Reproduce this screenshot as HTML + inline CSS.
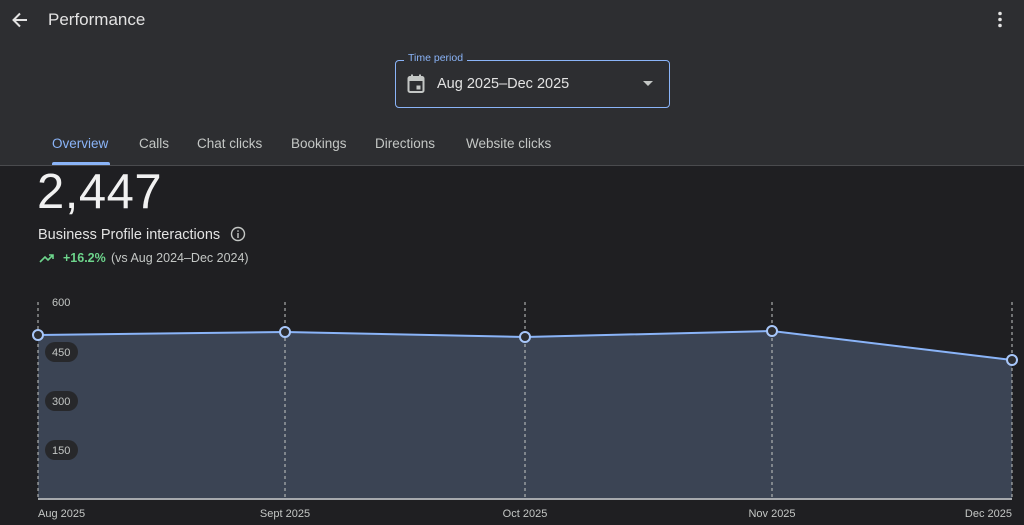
<!DOCTYPE html>
<html><head><meta charset="utf-8"><style>
*{margin:0;padding:0;box-sizing:border-box}
body{width:1024px;height:525px;overflow:hidden;background:#1f1f22;font-family:"Liberation Sans",sans-serif;position:relative;color:#e3e3e3}
.hdr{position:absolute;left:0;top:0;width:1024px;height:166px;background:#2d2e31;border-bottom:1px solid #4a4b4e}
.t{position:absolute;white-space:nowrap}
.tab{position:absolute;top:136px;font-size:13.5px;color:#c4c7c5}
</style></head><body>
<div class="hdr">
<svg class="t" style="left:10px;top:10px" width="20" height="20" viewBox="0 0 20 20"><path d="M17 10H4M10 3.5L3.5 10 10 16.5" stroke="#e3e3e3" stroke-width="2" fill="none"/></svg>
<div class="t" style="left:48px;top:10px;font-size:17px;color:#e3e3e3">Performance</div>
<svg class="t" style="left:996px;top:11px" width="8" height="18"><circle cx="4" cy="2.5" r="1.8" fill="#e3e3e3"/><circle cx="4" cy="8.5" r="1.8" fill="#e3e3e3"/><circle cx="4" cy="14.5" r="1.8" fill="#e3e3e3"/></svg>
<div class="t" style="left:395px;top:60px;width:275px;height:48px;border:1.5px solid #8ab4f8;border-radius:4px"></div>
<div class="t" style="left:404px;top:52px;padding:0 4px;background:#2d2e31;font-size:10.5px;color:#8ab4f8">Time period</div>
<svg class="t" style="left:407px;top:74px" width="18" height="20" viewBox="0 0 18 20"><rect x="1.5" y="3" width="15" height="15" rx="1.5" fill="none" stroke="#c4c7c5" stroke-width="2"/><rect x="1.5" y="3" width="15" height="4" fill="#c4c7c5"/><rect x="4" y="0.5" width="2" height="4" fill="#c4c7c5"/><rect x="12" y="0.5" width="2" height="4" fill="#c4c7c5"/><rect x="9.5" y="11.5" width="4" height="4" fill="#c4c7c5"/></svg>
<div class="t" style="left:437px;top:76px;font-size:14.5px;color:#e3e3e3">Aug 2025–Dec 2025</div>
<svg class="t" style="left:643px;top:81px" width="10" height="5"><path d="M0 0h10L5 5z" fill="#c4c7c5"/></svg>
<div class="tab" style="left:52px;color:#8ab4f8">Overview</div>
<div class="tab" style="left:139px">Calls</div>
<div class="tab" style="left:197px">Chat clicks</div>
<div class="tab" style="left:291px">Bookings</div>
<div class="tab" style="left:375px">Directions</div>
<div class="tab" style="left:466px">Website clicks</div>
<div class="t" style="left:52px;top:162px;width:58px;height:3px;background:#8ab4f8;border-radius:2px 2px 0 0"></div>
</div>
<div class="t" style="left:37px;top:165px;font-size:49px;color:#f1f1f1;line-height:54px;letter-spacing:0.5px">2,447</div>
<div class="t" style="left:38px;top:227px;font-size:14.5px;color:#e3e3e3">Business Profile interactions</div>
<svg class="t" style="left:230px;top:226px" width="16" height="16"><circle cx="8" cy="8" r="6.5" fill="none" stroke="#c4c7c5" stroke-width="1.4"/><rect x="7.3" y="7" width="1.4" height="5" fill="#c4c7c5"/><rect x="7.3" y="4.3" width="1.4" height="1.5" fill="#c4c7c5"/></svg>
<svg class="t" style="left:39px;top:252px" width="16" height="12"><path d="M1 10l5-5 3 3 5-5M10 3h4v4" stroke="#6dd58c" stroke-width="1.6" fill="none"/></svg>
<div class="t" style="left:63px;top:251px;font-size:12.5px;color:#6dd58c;font-weight:bold">+16.2%</div>
<div class="t" style="left:111px;top:251px;font-size:12.5px;color:#c4c7c5">(vs Aug 2024–Dec 2024)</div>
<svg class="t" style="left:0;top:290px" width="1024" height="235">
<path d="M38 45L285 42L525 47L772 41L1012 70V209H38Z" fill="#3b4454"/>
<g stroke="#c4c7c5" stroke-dasharray="3,3" stroke-width="1"><path d="M38 12V209M285 12V209M525 12V209M772 12V209M1012 12V209"/></g>
<path d="M38 209H1012" stroke="#a6a9ad" stroke-width="2"/>
<path d="M38 45L285 42L525 47L772 41L1012 70" stroke="#8ab4f8" stroke-width="2" fill="none"/>
<g fill="#2d2e31" stroke="#a8c7fa" stroke-width="2"><circle cx="38" cy="45" r="5"/><circle cx="285" cy="42" r="5"/><circle cx="525" cy="47" r="5"/><circle cx="772" cy="41" r="5"/><circle cx="1012" cy="70" r="5"/></g>
<g font-size="11" fill="#c4c7c5" font-family="Liberation Sans">
<text x="52" y="16">600</text>
<rect x="45" y="52" width="33" height="20" rx="10" fill="#27282b" stroke="none"/><text x="52" y="66">450</text>
<rect x="45" y="101" width="33" height="20" rx="10" fill="#27282b" stroke="none"/><text x="52" y="115">300</text>
<rect x="45" y="150" width="33" height="20" rx="10" fill="#27282b" stroke="none"/><text x="52" y="164">150</text>
<text x="38" y="227">Aug 2025</text>
<text x="285" y="227" text-anchor="middle">Sept 2025</text>
<text x="525" y="227" text-anchor="middle">Oct 2025</text>
<text x="772" y="227" text-anchor="middle">Nov 2025</text>
<text x="1012" y="227" text-anchor="end">Dec 2025</text>
</g>
</svg>
</body></html>
